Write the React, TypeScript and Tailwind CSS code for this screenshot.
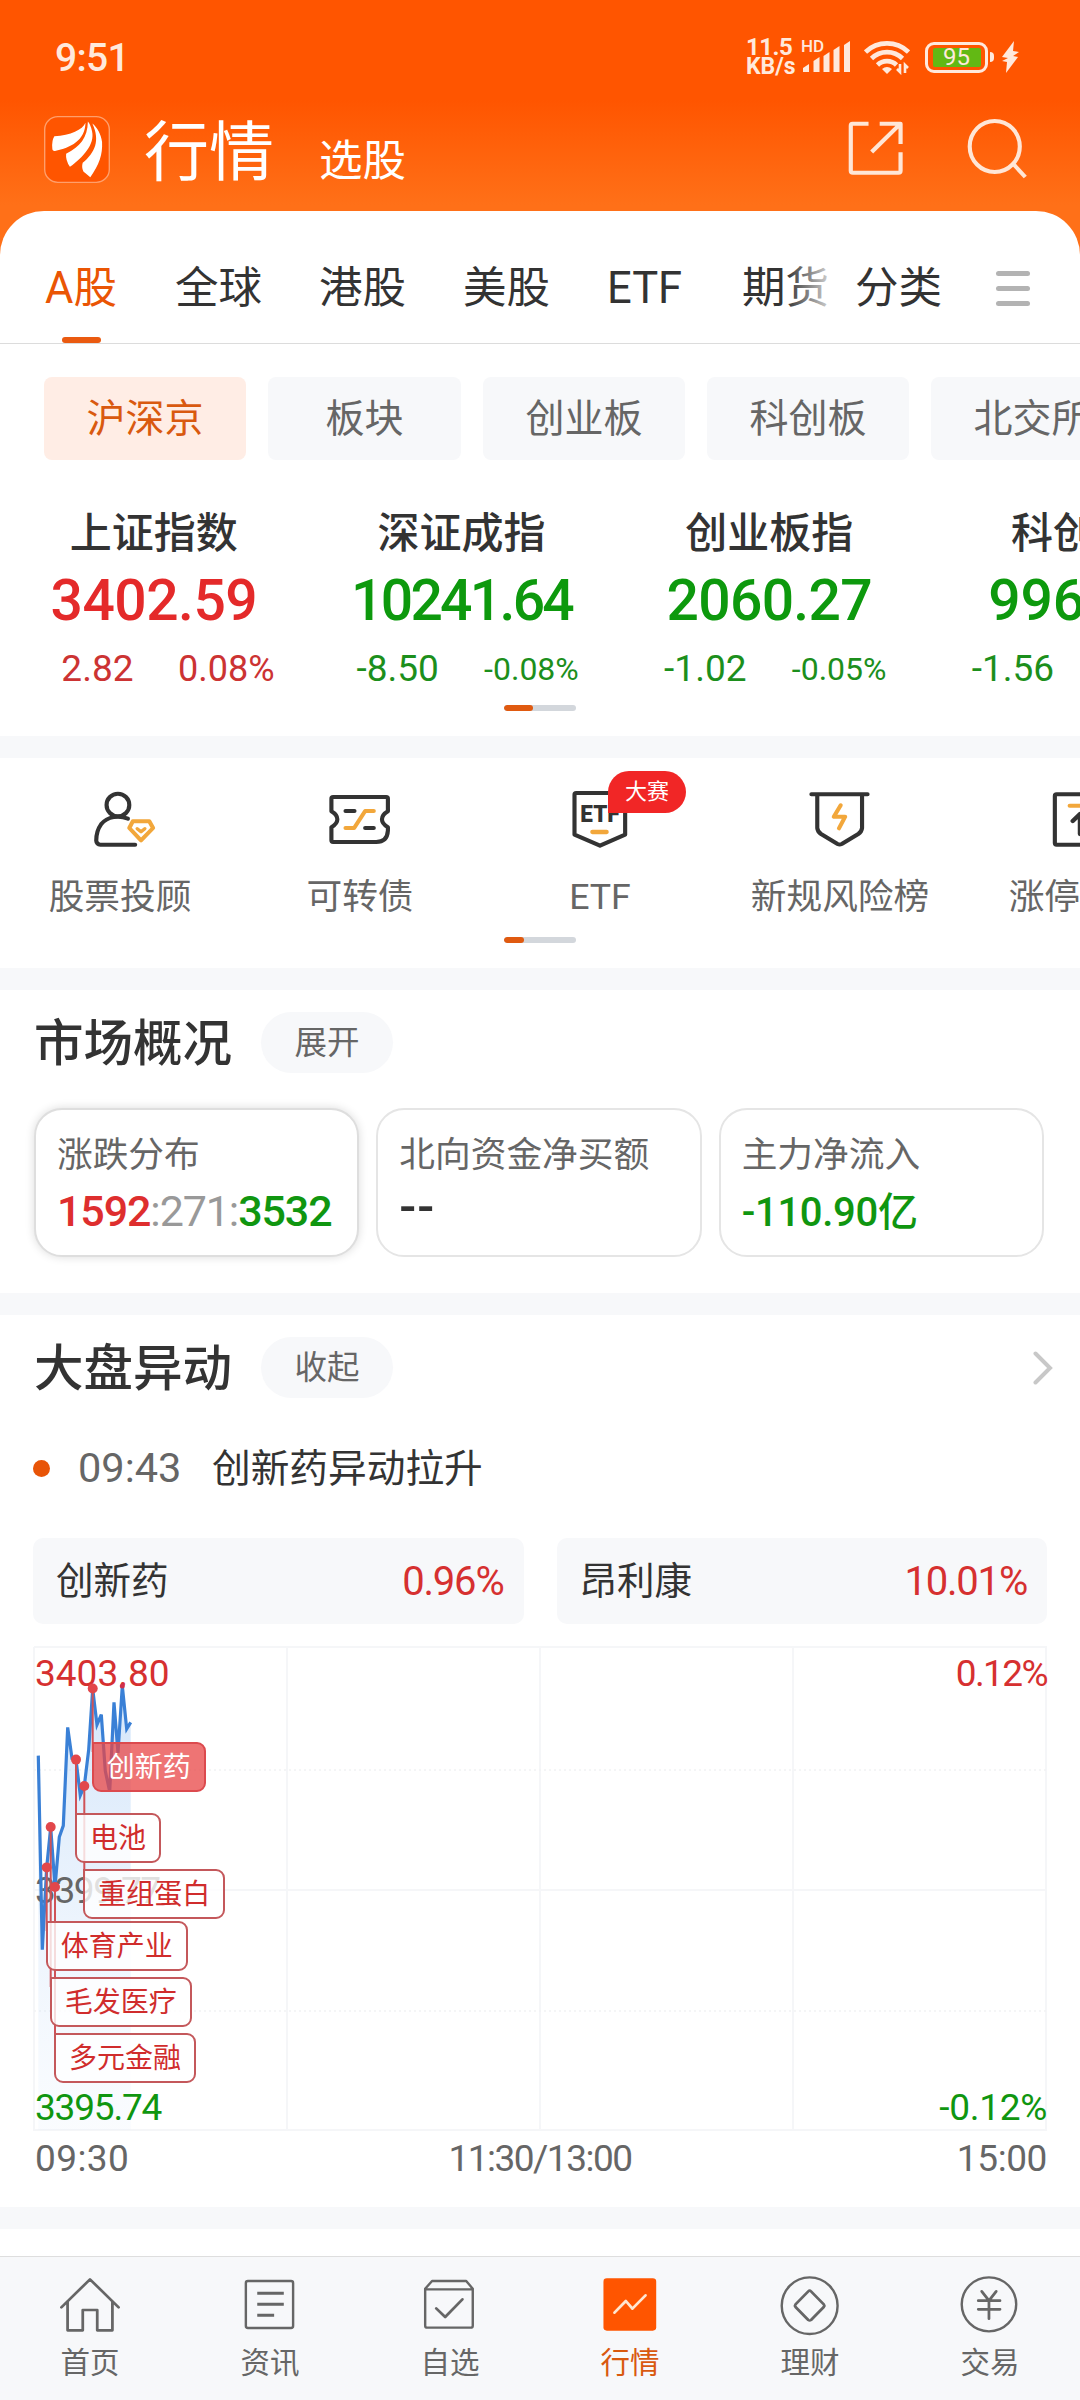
import React from 'react';
import { clsx } from 'clsx';

const MARKET_TABS = ['A股', '全球', '港股', '美股', 'ETF', '期货'];

const BOARDS = [
  { name: '沪深京', width: 'w-[202px]' },
  { name: '板块', width: 'w-[193px]' },
  { name: '创业板', width: 'w-[202px]' },
  { name: '科创板', width: 'w-[202px]' },
  { name: '北交所', width: 'w-[202px]' },
];

const INDEXES = [
  { name: '上证指数', price: '3402.59', change: '2.82', percent: '0.08%', up: true, tracking: 'tracking-[-0.5px]' },
  { name: '深证成指', price: '10241.64', change: '-8.50', percent: '-0.08%', up: false, tracking: 'tracking-[-2.7px]' },
  { name: '创业板指', price: '2060.27', change: '-1.02', percent: '-0.05%', up: false, tracking: 'tracking-[-0.7px]' },
  { name: '科创50', price: '996.34', change: '-1.56', percent: '-0.16%', up: false, tracking: 'tracking-[-0.1px]' },
];

const PRICE_POINTS: [number, number][] = [
  [5.3, 109.6], [9.3, 303.6], [13.7, 221.4], [17.7, 181.4], [22, 241], [26.3, 191],
  [30.3, 179.6], [34.7, 81.4], [39, 112.5], [43, 113.6], [47.3, 149.3], [51.3, 140],
  [55.7, 103.6], [59.7, 42.9], [64, 78.6], [68.3, 68.6], [72.3, 125], [76.7, 145.7],
  [81, 56.4], [85, 107], [89.3, 40], [93.7, 82.9], [97.7, 76.4],
];

// dot position on the line + top of the tag hanging below it
const EVENTS = [
  { name: '创新药', x: 59.7, y: 42.5, tag: 96, active: true },
  { name: '电池', x: 43, y: 113.6, tag: 167, active: false },
  { name: '重组蛋白', x: 51.3, y: 140, tag: 223, active: false },
  { name: '体育产业', x: 13.7, y: 221.4, tag: 275, active: false },
  { name: '毛发医疗', x: 17.7, y: 181, tag: 331, active: false },
  { name: '多元金融', x: 22, y: 241, tag: 387, active: false },
];

interface IconProps {
  box: string;
  className?: string;
  children: React.ReactNode;
}

const Icon: React.FC<IconProps> = ({ box, className, children }) => (
  <svg
    viewBox={box}
    preserveAspectRatio="none"
    fill="none"
    strokeLinecap="round"
    strokeLinejoin="round"
    className={clsx('block shrink-0 overflow-visible', className)}
  >
    {children}
  </svg>
);

const StatusBar = () => (
  <div className="flex h-[114px] items-center justify-between pl-[55px] pr-[61px] text-[#ffe9dc]">
    <span className="pt-[2px] text-[39px] leading-none font-medium tracking-[-0.7px]">9:51</span>
    <div className="flex items-center">
      <div className="w-[55px] text-[23px] leading-[19px] font-bold">
        <div className="text-[24px] tracking-[-0.5px]">11.5</div>
        <div>KB/s</div>
      </div>
      <div className="relative h-[32px] w-[50px]">
        <span className="absolute top-[-2px] left-0 text-[17px] leading-[14px] font-medium">HD</span>
        <svg viewBox="0 0 50 32" className="h-full w-full" fill="currentColor">
          <path d="M2 31v-4l6-4v8zM12.500 31V20l6-4v15zM22.500 31V15l6-4v20zM32.500 31V9l6-4v26zM43 31V4l6-4v31z" />
        </svg>
      </div>
      <svg viewBox="0 0 46 36" className="ml-[13px] h-[36px] w-[46px]" fill="none" stroke="currentColor" strokeWidth="4.6">
        <path d="M1.500 13a31 31 0 0 1 43 0M7.500 19.500a22 22 0 0 1 31 0M13.500 26a13.500 13.500 0 0 1 19 0" />
        <path d="M18 30q5-4 10 0l-5 5z" fill="currentColor" stroke="none" />
        <path d="M36 25v8l-3-3M41 34v-8l3 3" strokeWidth="2.600" />
      </svg>
      <div className="ml-[15px] flex h-[31px] w-[63px] items-center justify-center rounded-[9px] border-[3px] border-current">
        <span className="flex h-[19px] w-[48px] items-center justify-center rounded-[2px] bg-[#62b914] text-[24px] leading-none">
          95
        </span>
      </div>
      <span className="ml-[2px] h-[10px] w-[4px] rounded-r bg-current" />
      <svg viewBox="0 0 18 32" className="ml-[7px] h-[32px] w-[18px]" fill="currentColor">
        <path d="M13 0L1 16l6 1-6 3 5 1-1 11 12-16-5-1 6-4-6-1z" />
      </svg>
    </div>
  </div>
);

const Header = () => (
  <header className="h-[255px] shrink-0 bg-[linear-gradient(180deg,#ff5500_0,#ff5500_100px,#ff7018_205px)]">
    <StatusBar />
    <div className="flex h-[70px] items-center pl-[44px] text-white">
      <Icon box="128 347 191 199" className="h-[67px] w-[66px]">
        <rect x="130" y="349" width="187" height="195" rx="38" fill="#ff5500" stroke="#ff9f6b" strokeWidth="4" />
        <g fill="#fff">
          <path d="M248 367C240 388 205 404 158 407Q150 420 152 443Q152 452 160 451C205 441 247 420 248 367z" />
          <path d="M255 363C254 412 232 438 192 459Q190 478 203 498C240 470 276 432 267 392Q263 372 255 363z" />
          <path d="M268 369C291 420 276 455 240 486Q236 500 242 512L262 529C288 490 298 462 296 424C293 400 282 381 268 369z" />
        </g>
      </Icon>
      <h1 className="ml-[34px] pt-[7px] text-[65px] leading-[70px] font-normal">行情</h1>
      <span className="ml-[45px] mt-[25px] text-[43.500px] leading-[50px]">选股</span>
      <Icon box="895 364 158 162" className="mb-[2px] ml-auto h-[54px] w-[55px]">
        <path
          d="M954 372H908Q903 372 903 378V513Q903 519 909 519H1040Q1046 519 1046 513V458M986 372H1046V433M1043 375L963 457"
          stroke="#ffe6d6"
          strokeWidth="12"
          strokeLinecap="butt"
        />
      </Icon>
      <Icon box="1242 356 172 176" className="mb-[2px] ml-[65px] mr-[53px] h-[59px] w-[59px]">
        <ellipse cx="1320" cy="438" rx="73" ry="76" stroke="#ffe6d6" strokeWidth="12" />
        <path d="M1372 488L1409 529" stroke="#ffe6d6" strokeWidth="12" strokeLinecap="butt" />
      </Icon>
    </div>
  </header>
);

const MarketTabs = () => (
  <nav className="flex h-[133px] border-b border-[#dcdcdc] pl-[45px] pt-[23px] text-[43.500px] text-[#333]">
    <div className="relative flex w-[783px] gap-[57px] overflow-hidden">
      {MARKET_TABS.map((tab, i) => (
        <div
          key={tab}
          className={clsx('relative flex h-full shrink-0 items-center', i === 0 && 'w-[73px] text-[#ea5504]', tab === 'ETF' && 'w-[78px]')}
        >
          {tab}
          {i === 0 && <span className="absolute bottom-0 left-[17px] h-[6px] w-[39px] rounded-full bg-[#ea5a10]" />}
        </div>
      ))}
      <div className="absolute inset-y-0 right-0 w-[42px] bg-linear-to-r from-white/0 to-white/75" />
    </div>
    <div className="ml-[27px] flex items-center">分类</div>
    <div className="ml-[54px] flex flex-col justify-center gap-[10px]">
      <span className="h-[5px] w-[34px] rounded-full bg-[#b3b3b3]" />
      <span className="h-[5px] w-[34px] rounded-full bg-[#b3b3b3]" />
      <span className="h-[5px] w-[34px] rounded-full bg-[#b3b3b3]" />
    </div>
  </nav>
);

const ScrollHint = ({ filled }: { filled: string }) => (
  <div className="mx-auto h-[6px] w-[72px] overflow-hidden rounded-full bg-[#d3d7dc]">
    <div className={clsx('h-full rounded-full bg-[#e05a10]', filled)} />
  </div>
);

const IndexSection = () => (
  <section className="h-[392px] overflow-hidden pt-[33px]">
    <div className="flex gap-[22px] pl-[44px]">
      {BOARDS.map((board, i) => (
        <div
          key={board.name}
          className={clsx(
            'flex h-[83px] shrink-0 items-center justify-center rounded-lg pt-[2px] text-[39px]',
            board.width,
            i === 0 ? 'bg-[#ffede5] text-[#d9590f]' : 'bg-[#f7f8fa] text-[#666]'
          )}
        >
          {board.name}
        </div>
      ))}
    </div>
    <div className="mt-[49px] flex">
      {INDEXES.map((item) => (
        <div key={item.name} className={clsx('w-[307.700px] shrink-0 text-center', item.up ? 'text-[#e42a2a]' : 'text-[#0d990d]')}>
          <div className="text-[42px] leading-[50px] font-medium text-[#333]">{item.name}</div>
          <div className={clsx('mt-[8px] text-[57px] leading-[68px] font-medium', item.tracking)}>{item.price}</div>
          <div
            className={clsx(
              'mt-[9px] grid grid-cols-2 items-center pr-[17px] text-[37px] leading-[50px]',
              item.up ? 'pl-[33px] text-[#cc3333]' : 'pl-[23px] text-[#1c8f1c]'
            )}
          >
            <span>{item.change}</span>
            <span className={item.up ? 'text-[36px]' : 'text-[32px]'}>{item.percent}</span>
          </div>
        </div>
      ))}
    </div>
    <div className="mt-[11px]">
      <ScrollHint filled="w-[29px]" />
    </div>
  </section>
);

const QuickEntry = ({ label, children }: { label: string; children: React.ReactNode }) => (
  <div className="flex w-[240px] shrink-0 flex-col items-center pt-[32px]">
    <div className="relative">{children}</div>
    <span className="mt-[22px] whitespace-nowrap text-[35.700px] leading-[50px] text-[#666]">{label}</span>
  </div>
);

const QuickEntries = () => (
  <section className="h-[210px] overflow-hidden">
    <div className="flex">
      <QuickEntry label="股票投顾">
        <Icon box="243.500 150 209 180" className="h-[60px] w-[72px]">
          <g stroke="#333" strokeWidth="12">
            <ellipse cx="342" cy="195" rx="33" ry="34" />
            <path d="M371 236C346 226 312 228 293 253C281 270 279 288 279 302Q280 314 291 314H392" />
          </g>
          <path d="M385 244H433L444 264L409 301L375 264z" stroke="#f2a73b" strokeWidth="12" />
          <path d="M398 266L409 275L420 266" stroke="#f2a73b" strokeWidth="10" />
        </Icon>
      </QuickEntry>
      <QuickEntry label="可转债">
        <Icon box="940.500 150 209 180" className="h-[60px] w-[72px]">
          <path
            d="M967 171H1121Q1126 171 1126 176V214C1103 228 1103 248 1126 262V272Q1124 306 1092 306H967Q962 306 962 301V262C985 248 985 228 962 214V176Q962 171 967 171z"
            stroke="#333"
            strokeWidth="12"
          />
          <path d="M1003 213H1029M1060 264H1085" stroke="#333" strokeWidth="12" />
          <path d="M1003 264H1028L1060 213H1085" stroke="#f2a73b" strokeWidth="12" />
        </Icon>
      </QuickEntry>
      <QuickEntry label="ETF">
        <Icon box="69.500 150 209 180" className="h-[60px] w-[72px]">
          <path d="M105 159H242Q247 159 247 164V284L174 317L100 284V164Q100 159 105 159z" stroke="#333" strokeWidth="12" />
          <text x="174" y="247" textAnchor="middle" textLength="114" lengthAdjust="spacingAndGlyphs" fontSize="72" fontWeight="900" fill="#333">
            ETF
          </text>
          <path d="M152 276H193" stroke="#f2a73b" strokeWidth="13" />
        </Icon>
        <span className="absolute -top-[19px] left-[44px] flex h-[42px] w-[78px] items-center justify-center rounded-[21px] rounded-bl-none bg-[#f12626] text-[22px] leading-none text-white">
          大赛
        </span>
      </QuickEntry>
      <QuickEntry label="新规风险榜">
        <Icon box="766.500 150 209 180" className="h-[60px] w-[72px]">
          <path d="M788 163H951M805 163V264Q806 275 816 282L864 312Q870 315 876 312L924 282Q934 275 935 264V163" stroke="#333" strokeWidth="12" />
          <path d="M873 196L853 230H886L868 265" stroke="#f2a73b" strokeWidth="12" />
        </Icon>
      </QuickEntry>
      <QuickEntry label="涨停分析">
        <Icon box="1463.500 150 209 180" className="h-[60px] w-[72px]">
          <rect x="1495" y="163" width="146" height="151" rx="5" stroke="#333" strokeWidth="12" />
          <path d="M1538 197H1598" stroke="#f2a73b" strokeWidth="12" />
          <path d="M1568 282V222L1547 243M1568 222L1589 243" stroke="#333" strokeWidth="13" />
        </Icon>
      </QuickEntry>
    </div>
    <div className="mt-[15px]">
      <ScrollHint filled="w-[20px]" />
    </div>
  </section>
);

const SectionTitle = ({ title, action }: { title: string; action: string }) => (
  <div className="flex items-center">
    <h2 className="w-[227px] pt-[3px] text-[49.500px] leading-[58px] font-medium text-[#333]">{title}</h2>
    <span className="flex h-[61px] w-[132px] items-center justify-center rounded-full bg-[#f7f8fa] pt-px text-[32.500px] text-[#666]">
      {action}
    </span>
  </div>
);

const OverviewCard = ({ label, active, children }: { label: string; active?: boolean; children: React.ReactNode }) => (
  <div
    className={clsx(
      'h-[149px] flex-1 rounded-[28px] border-2 bg-white pl-[21px] pt-[20px]',
      active ? 'border-[#dedede] shadow-[0_0_10px_rgba(0,0,0,0.14)]' : 'border-[#e5e5e5]'
    )}
  >
    <div className="whitespace-nowrap text-[35.700px] leading-[50px] text-[#666]">{label}</div>
    <div className="mt-[6px] whitespace-nowrap text-[43px] leading-[50px] font-medium tracking-[-1.1px]">{children}</div>
  </div>
);

const MarketOverview = () => (
  <section className="h-[303px] pl-[34px] pr-[36px] pt-[22px]">
    <SectionTitle title="市场概况" action="展开" />
    <div className="mt-[35px] flex gap-[17px]">
      <OverviewCard label="涨跌分布" active>
        <span className="text-[#de2e2e]">1592</span>
        <span className="font-normal text-[#999]">:271:</span>
        <span className="text-[#109610]">3532</span>
      </OverviewCard>
      <OverviewCard label="北向资金净买额">
        <span className="relative -top-[4px] text-[50px] tracking-[1px] text-[#333]">--</span>
      </OverviewCard>
      <OverviewCard label="主力净流入">
        <span className="text-[40px] tracking-[-0.3px] text-[#109610]">-110.90亿</span>
      </OverviewCard>
    </div>
  </section>
);

const StockChip = ({ name, percent }: { name: string; percent: string }) => (
  <div className="flex h-[86px] flex-1 items-center justify-between rounded-[10px] bg-[#f7f8fa] pl-[23px] pr-[20px] pt-px">
    <span className="text-[37.500px] text-[#333]">{name}</span>
    <span className="text-[40px] tracking-[-1.2px] text-[#d63030]">{percent}</span>
  </div>
);

const IntradayChart = () => {
  const line = PRICE_POINTS.map(([x, y]) => `${x},${y}`).join(' ');

  return (
    <div className="relative h-[485px] text-[37px] leading-[40px]">
      <svg viewBox="0 0 1014 485" className="absolute inset-0 h-full w-full" fill="none">
        <defs>
          <linearGradient id="area" x1="0" y1="0" x2="0" y2="1">
            <stop offset="0" stopColor="#a9cdf5" stopOpacity="0.5" />
            <stop offset="1" stopColor="#dbe9fb" stopOpacity="0.15" />
          </linearGradient>
        </defs>
        <path d="M1 1H1013V484H1V1M254 1V484M507 1V484M760 1V484M1 244H1013" stroke="#f5f6f8" strokeWidth="2" />
        <path d="M1 124H1013M1 365H1013" stroke="#f1f2f4" strokeWidth="1.500" strokeDasharray="2 3" />
        <polygon points={`${line} 97.7,484 5.3,484`} fill="url(#area)" />
      </svg>
      <span className="absolute top-[8px] left-[2px] text-[#d63030]">3403.80</span>
      <span className="absolute top-[8px] right-0 tracking-[-1.600px] text-[#d63030]">0.12%</span>
      <span className="absolute top-[225px] left-[2px] tracking-[-1.400px] text-[#666]">3399.77</span>
      <span className="absolute top-[442px] left-[2px] tracking-[-1.200px] text-[#109610]">3395.74</span>
      <span className="absolute top-[442px] right-0 tracking-[-0.3px] text-[#109610]">-0.12%</span>
      <svg viewBox="0 0 1014 485" className="absolute inset-0 h-full w-full" fill="none">
        <polyline points={line} stroke="#3a80d6" strokeWidth="3.200" />
        {EVENTS.map((e) => (
          <path key={e.name} d={`M${e.x} ${e.y}V${e.tag + 10}`} stroke="#cf5257" strokeWidth="2" />
        ))}
        {EVENTS.map((e) => (
          <circle key={e.name} cx={e.x} cy={e.y} r="5" fill="#e2474b" />
        ))}
        <circle cx="89.300" cy="40" r="2.500" fill="#d0304a" />
      </svg>
      {EVENTS.map((e) => (
        <span
          key={e.name}
          className={clsx(
            'absolute flex h-[50px] items-center rounded-[9px] rounded-tl-none border-2 px-[13px] pt-px text-[28px] leading-none',
            e.active ? 'border-[#dc4a4e] bg-[#e84545]/75 text-white' : 'border-[#c4585b] bg-white/80 text-[#d02c2c]'
          )}
          style={{ left: e.x - 1, top: e.tag }}
        >
          {e.name}
        </span>
      ))}
    </div>
  );
};

const MarketMoves = () => (
  <section className="h-[892px] px-[33px] pt-[22px]">
    <div className="flex items-center justify-between pl-px">
      <SectionTitle title="大盘异动" action="收起" />
      <svg viewBox="0 0 20 34" className="-mr-[6px] h-[34px] w-[20px]" fill="none" stroke="#c8c8c8" strokeWidth="4" strokeLinecap="round">
        <path d="M2.500 2.500L17 17L2.500 31.500" />
      </svg>
    </div>
    <div className="mt-[45px] flex h-[50px] items-center text-[38.700px]">
      <span className="h-[17px] w-[17px] rounded-full bg-[#e85407]" />
      <span className="ml-[28px] w-[134px] pt-px text-[41.500px] text-[#666]">09:43</span>
      <span className="pt-[2px] text-[#333]">创新药异动拉升</span>
    </div>
    <div className="mt-[45px] flex gap-[33px]">
      <StockChip name="创新药" percent="0.96%" />
      <StockChip name="昂利康" percent="10.01%" />
    </div>
    <div className="mt-[22px]">
      <IntradayChart />
    </div>
    <div className="mt-[8px] grid grid-cols-3 text-[37px] leading-[40px] text-[#666]">
      <span className="pl-[2px] tracking-[0.4px]">09:30</span>
      <span className="text-center tracking-[-1.500px]">11:30/13:00</span>
      <span className="text-right tracking-[-0.4px]">15:00</span>
    </div>
  </section>
);

const NavItem = ({ label, box, active, children }: { label: string; box: string; active?: boolean; children: React.ReactNode }) => (
  <div className={clsx('flex flex-1 flex-col items-center pt-[18px]', active ? 'text-[#d9590f]' : 'text-[#666]')}>
    <Icon box={box} className="h-[60px] w-[60px]">
      {children}
    </Icon>
    <span className="mt-[8px] text-[29.500px] leading-[40px]">{label}</span>
  </div>
);

const BottomNav = () => (
  <nav className="flex h-[144px] shrink-0 border-t border-[#dedede] bg-[#f7f8fa]">
    <NavItem label="首页" box="174 135 174 180">
      <path d="M178 232L261 148L344 232M196 214V301H240V240H282V301H326V214" stroke="#666" strokeWidth="8" />
    </NavItem>
    <NavItem label="资讯" box="697 135 174 180">
      <rect x="714" y="153" width="137" height="141" rx="6" stroke="#666" strokeWidth="7" />
      <path d="M747 190H824M747 223H824M747 256H796" stroke="#666" strokeWidth="9" strokeLinecap="butt" />
    </NavItem>
    <NavItem label="自选" box="1220 135 174 180">
      <path d="M1235 176L1255 153H1354L1373 176V287Q1373 293 1366 293H1242Q1235 293 1235 287zM1235 178H1373" stroke="#666" strokeWidth="7" />
      <path d="M1267 235L1293 261L1343 208" stroke="#666" strokeWidth="8" />
    </NavItem>
    <NavItem label="行情" box="174 135 174 180" active>
      <rect x="184" y="145" width="153" height="157" rx="10" fill="#ff5500" />
      <path d="M216 248L249 213L268 236L306 196" stroke="#ffe6d0" strokeWidth="8" />
    </NavItem>
    <NavItem label="理财" box="697 135 174 180">
      <ellipse cx="783" cy="227" rx="81" ry="85" stroke="#666" strokeWidth="7" />
      <path d="M779 184Q783 180 787 184L824 223Q827 227 824 231L787 270Q783 273 779 270L742 231Q739 227 742 223z" stroke="#666" strokeWidth="8" />
    </NavItem>
    <NavItem label="交易" box="1220 135 174 180">
      <ellipse cx="1304" cy="223" rx="79" ry="81" stroke="#666" strokeWidth="7" />
      <path d="M1283 184L1304 212L1325 184M1304 212V266M1273 212H1336M1273 238H1336" stroke="#666" strokeWidth="8" />
    </NavItem>
  </nav>
);

const Divider = () => <div className="h-[22px] bg-[#f7f8fa]" />;

const App: React.FC = () => {
  return (
    <div className="flex h-[2400px] w-[1080px] flex-col overflow-hidden bg-white font-['Roboto','Noto_Sans_CJK_SC',sans-serif]">
      <Header />
      <main className="-mt-[44px] flex-1 overflow-hidden rounded-t-[44px] bg-white">
        <MarketTabs />
        <IndexSection />
        <Divider />
        <QuickEntries />
        <Divider />
        <MarketOverview />
        <Divider />
        <MarketMoves />
        <Divider />
      </main>
      <BottomNav />
    </div>
  );
};

export default App;
